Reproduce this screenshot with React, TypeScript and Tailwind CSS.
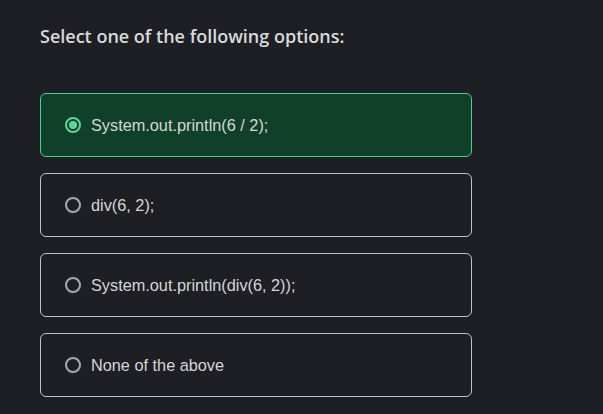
import { useState } from 'react';

const options = [
  'System.out.println(6 / 2);',
  'div(6, 2);',
  'System.out.println(div(6, 2));',
  'None of the above',
];

export default function App() {
  const [selected, setSelected] = useState(0);

  return (
    <div className="min-h-screen w-full bg-[#1e1f24] px-10 pt-[24px] pb-4">
      <h1 className="text-[18px] leading-[24px] font-semibold text-[#d9dadb] font-['Open_Sans',sans-serif]">
        Select one of the following options:
      </h1>

      <div className="mt-[45px] flex w-[432px] flex-col gap-4">
        {options.map((opt, i) => {
          const active = i === selected;
          return (
            <button
              key={opt}
              onClick={() => setSelected(i)}
              className={
                active
                  ? 'flex h-16 items-center gap-[10px] rounded-md border border-[#4fd17f] bg-[#11402a] pl-6 text-left'
                  : 'flex h-16 items-center gap-[10px] rounded-md border border-[#b9c3c8] bg-[#1e1f24] pl-6 text-left'
              }
            >
              {active ? (
                <span className="flex h-4 w-4 items-center justify-center rounded-full border-2 border-[#5fd596]">
                  <span className="h-2 w-2 rounded-full bg-[#5fd596]" />
                </span>
              ) : (
                <span className="h-4 w-4 rounded-full border-2 border-[#a9aaab]" />
              )}
              <span className="text-[16.3px] text-[#d6d6d6] font-['Liberation_Sans',Arial,sans-serif]">
                {opt}
              </span>
            </button>
          );
        })}
      </div>
    </div>
  );
}
